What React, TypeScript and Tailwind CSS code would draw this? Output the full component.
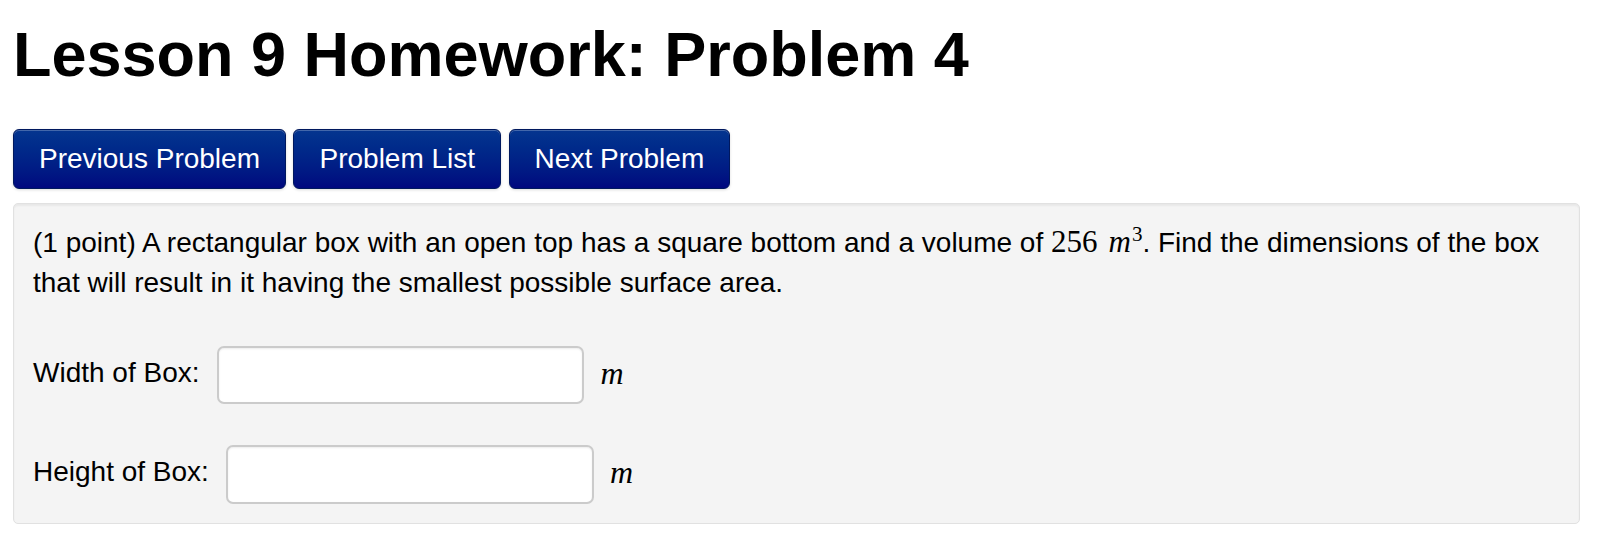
export default function App() {
  const buttons = ["Previous Problem", "Problem List", "Next Problem"];

  return (
    <div className="min-h-screen bg-white px-[13px] font-['Liberation_Sans',Arial,sans-serif] text-black">
      <h1 className="pt-[16px] text-[63px] font-bold leading-[76px]">
        Lesson 9 Homework: Problem 4
      </h1>

      <div className="mt-[37px] flex gap-[7.5px]">
        {buttons.map((label) => (
          <button
            key={label}
            type="button"
            className="h-[60px] rounded-[6px] border border-[#00185e] bg-linear-to-b from-[#05358f] to-[#00077f] px-[25px] text-[28px] leading-[58px] text-white shadow-[inset_0_1px_0_rgba(255,255,255,0.25),0_1px_3px_rgba(0,0,0,0.15)]"
          >
            {label}
          </button>
        ))}
      </div>

      <div className="mt-[14px] w-[1567px] rounded-[5px] border border-[#e1e1e1] bg-[#f4f4f4] px-[19px] pt-[19px] pb-[19px] text-[28px] leading-[40px] shadow-[inset_0_2px_2px_rgba(0,0,0,0.05)]">
        <p>
          (1 point) A rectangular box with an open top has a square bottom and a
          volume of{" "}
          <span className="font-['Liberation_Serif','DejaVu_Serif',serif] text-[31px] leading-none">
            256
            <i className="ml-[11px] pr-[1px]">m</i>
            <span className="align-super text-[21px] leading-none">3</span>
          </span>
          . Find the dimensions of the box that will result in it having the
          smallest possible surface area.
        </p>

        <div className="mt-[43px] flex items-center">
          <span className="pb-[5px]">Width of Box:</span>
          <input
            type="text"
            className="ml-[17px] h-[58px] w-[367px] rounded-[7px] border-2 border-[#cbcbcb] bg-white shadow-[inset_0_1px_2px_rgba(0,0,0,0.08)] outline-none"
          />
          <i className="ml-[17px] pb-[5px] font-['Liberation_Serif','DejaVu_Serif',serif] text-[32px]">
            m
          </i>
        </div>

        <div className="mt-[41px] flex items-center">
          <span className="pb-[5px]">Height of Box:</span>
          <input
            type="text"
            className="ml-[17px] h-[59px] w-[368px] rounded-[7px] border-2 border-[#cbcbcb] bg-white shadow-[inset_0_1px_2px_rgba(0,0,0,0.08)] outline-none"
          />
          <i className="ml-[16px] pb-[5px] font-['Liberation_Serif','DejaVu_Serif',serif] text-[32px]">
            m
          </i>
        </div>
      </div>
    </div>
  );
}
